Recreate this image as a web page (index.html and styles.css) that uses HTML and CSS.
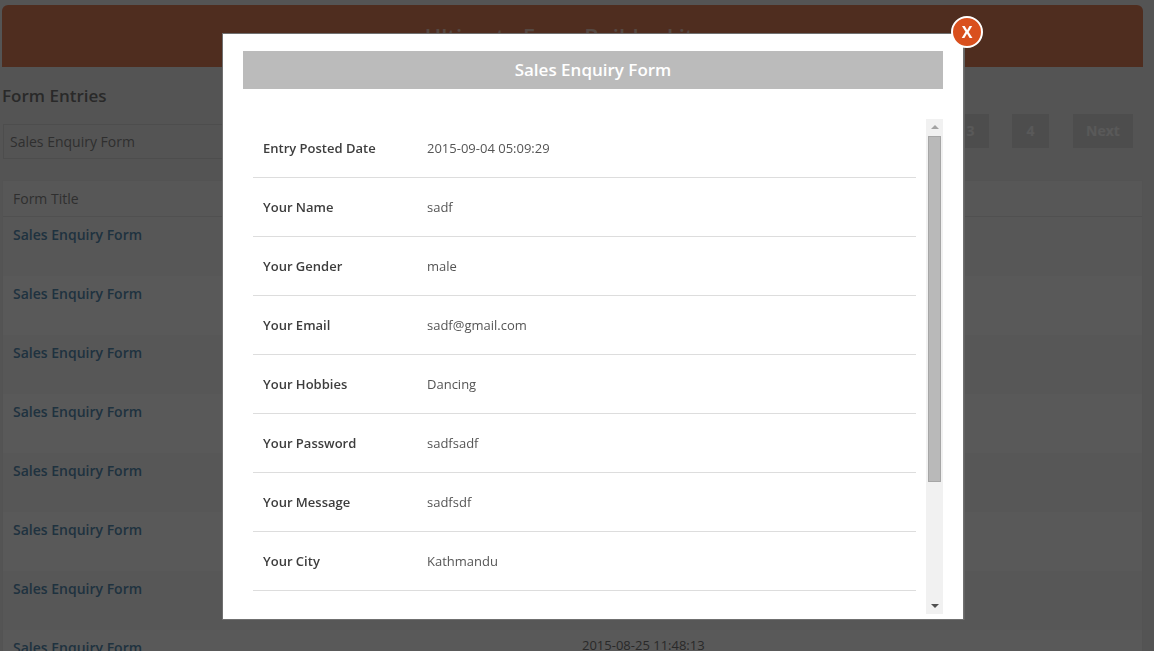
FILE: index.html
```html
<!DOCTYPE html>
<html lang="en">
<head>
<meta charset="utf-8">
<title>Form Entries</title>
<link rel="stylesheet" href="styles.css">
</head>
<body>
<div class="page">
  <header class="banner">Ultimate Form Builder Lite</header>
  <h2 class="heading">Form Entries</h2>
  <div class="tools">
    <div class="select">Sales Enquiry Form</div>
    <nav class="pager">
      <span class="pg pg-num">3</span>
      <span class="pg pg-num">4</span>
      <span class="pg pg-next">Next</span>
    </nav>
  </div>
  <div class="table">
    <div class="thead">Form Title</div>
    <div class="row"><a class="link">Sales Enquiry Form</a></div>
    <div class="row"><a class="link">Sales Enquiry Form</a></div>
    <div class="row"><a class="link">Sales Enquiry Form</a></div>
    <div class="row"><a class="link">Sales Enquiry Form</a></div>
    <div class="row"><a class="link">Sales Enquiry Form</a></div>
    <div class="row"><a class="link">Sales Enquiry Form</a></div>
    <div class="row"><a class="link">Sales Enquiry Form</a></div>
    <div class="row"><a class="link">Sales Enquiry Form</a><span class="date">2015-08-25 11:48:13</span></div>
  </div>
</div>

<div class="overlay"></div>

<section class="modal">
  <button class="close">X</button>
  <h3 class="modal-title">Sales Enquiry Form</h3>
  <div class="modal-body">
    <div class="entries">
      <div class="entry"><b class="label">Entry Posted Date</b><span class="value">2015-09-04 05:09:29</span></div>
      <div class="entry"><b class="label">Your Name</b><span class="value">sadf</span></div>
      <div class="entry"><b class="label">Your Gender</b><span class="value">male</span></div>
      <div class="entry"><b class="label">Your Email</b><span class="value">sadf@gmail.com</span></div>
      <div class="entry"><b class="label">Your Hobbies</b><span class="value">Dancing</span></div>
      <div class="entry"><b class="label">Your Password</b><span class="value">sadfsadf</span></div>
      <div class="entry"><b class="label">Your Message</b><span class="value">sadfsdf</span></div>
      <div class="entry"><b class="label">Your City</b><span class="value">Kathmandu</span></div>
    </div>
    <div class="scrollbar">
      <span class="arrow arrow-up"></span>
      <span class="thumb"></span>
      <span class="arrow arrow-down"></span>
    </div>
  </div>
</section>
</body>
</html>
```
FILE: styles.css
```css
* { box-sizing: border-box; }
html, body { margin: 0; height: 100%; overflow: hidden; }
body { background: #f1f1f1; font-family: "Open Sans", sans-serif; color: #777; font-size: 14px; }

.page { padding: 5px 11px 0 2px; height: 651px; overflow: hidden; }

.banner {
  height: 62px;
  padding-right: 14px;
  background: #e2805b;
  border-radius: 6px 6px 0 0;
  color: #f4cdbd;
  font-size: 22px;
  font-weight: 600;
  line-height: 62px;
  text-align: center;
}
.heading { margin: 19px 0 0; height: 20px; font-size: 17px; line-height: 20px; font-weight: 600; color: #777; }

.tools { display: flex; justify-content: space-between; margin-top: 18px; height: 56px; }
.select {
  width: 300px; height: 35px; margin-left: 1px;
  border: 1px solid #ddd;
  padding-left: 6px;
  line-height: 33px;
  font-size: 14px;
  color: #888;
}
.pager { display: flex; gap: 23px; margin-top: -10px; padding-right: 10px; }
.pg {
  height: 34px; background: #ddd; color: #fff;
  font-size: 14px; font-weight: 700; line-height: 34px; text-align: center;
}
.pg-num { width: 37px; }
.pg-next { width: 60px; margin-left: 1px; }

.table { border: 1px solid #eee; border-bottom: 0; background: #fff; }
.thead { height: 36px; padding-left: 10px; line-height: 36px; font-size: 14px; color: #888; border-bottom: 1px solid #e5e5e5; background: #f9f9f9; }
.row { display: flex; height: 59px; padding: 7px 0 0 10px; line-height: 22px; }
.row:nth-child(even) { background: #f9f9f9; }
.link { width: 569px; font-weight: 600; color: #5a8fb5; font-size: 14px; }
.date { font-size: 13px; color: #777; margin-top: -3px; }

.overlay { position: fixed; inset: 0; background: rgba(0, 0, 0, .65); }

.modal {
  position: absolute; left: 223px; top: 34px;
  width: 740px; height: 585px;
  background: #fff;
  box-shadow: 0 0 0 1px #707070, 1px 0 0 1px #636363;
  padding: 17px 20px 0;
}
.close {
  position: absolute; right: -20px; top: -18px;
  width: 32px; height: 32px; padding: 0;
  border: 2px solid #fff; border-radius: 50%;
  background: #d9501e; color: #fff;
  font-family: "Open Sans", sans-serif; font-size: 16px; font-weight: 700; line-height: 26px;
  text-align: center;
}
.modal-title {
  margin: 0; height: 38px;
  background: #bbb; color: #fff;
  font-size: 17px; font-weight: 600; line-height: 38px; text-align: center;
}
.modal-body { display: flex; justify-content: space-between; margin-top: 30px; height: 495px; overflow: hidden; }
.entries { width: 673px; padding-left: 10px; }
.entry {
  display: flex; height: 59px; align-items: center;
  border-bottom: 1px solid #ddd; padding-left: 10px;
  font-size: 13px; color: #444;
}
.label { width: 164px; font-weight: 600; color: #3d3d3d; }
.value { color: #555; }

.scrollbar { position: relative; width: 17px; background: #f1f1f1; }
.thumb { position: absolute; left: 2px; top: 17px; width: 13px; height: 346px; background: #b9b9b9; border: 1px solid #a6a6a6; }
.arrow { position: absolute; left: 5px; width: 0; height: 0; border-left: 4px solid transparent; border-right: 4px solid transparent; }
.arrow-up { top: 6px; border-bottom: 4px solid #a3a3a3; }
.arrow-down { bottom: 6px; border-top: 4px solid #505050; }
```
